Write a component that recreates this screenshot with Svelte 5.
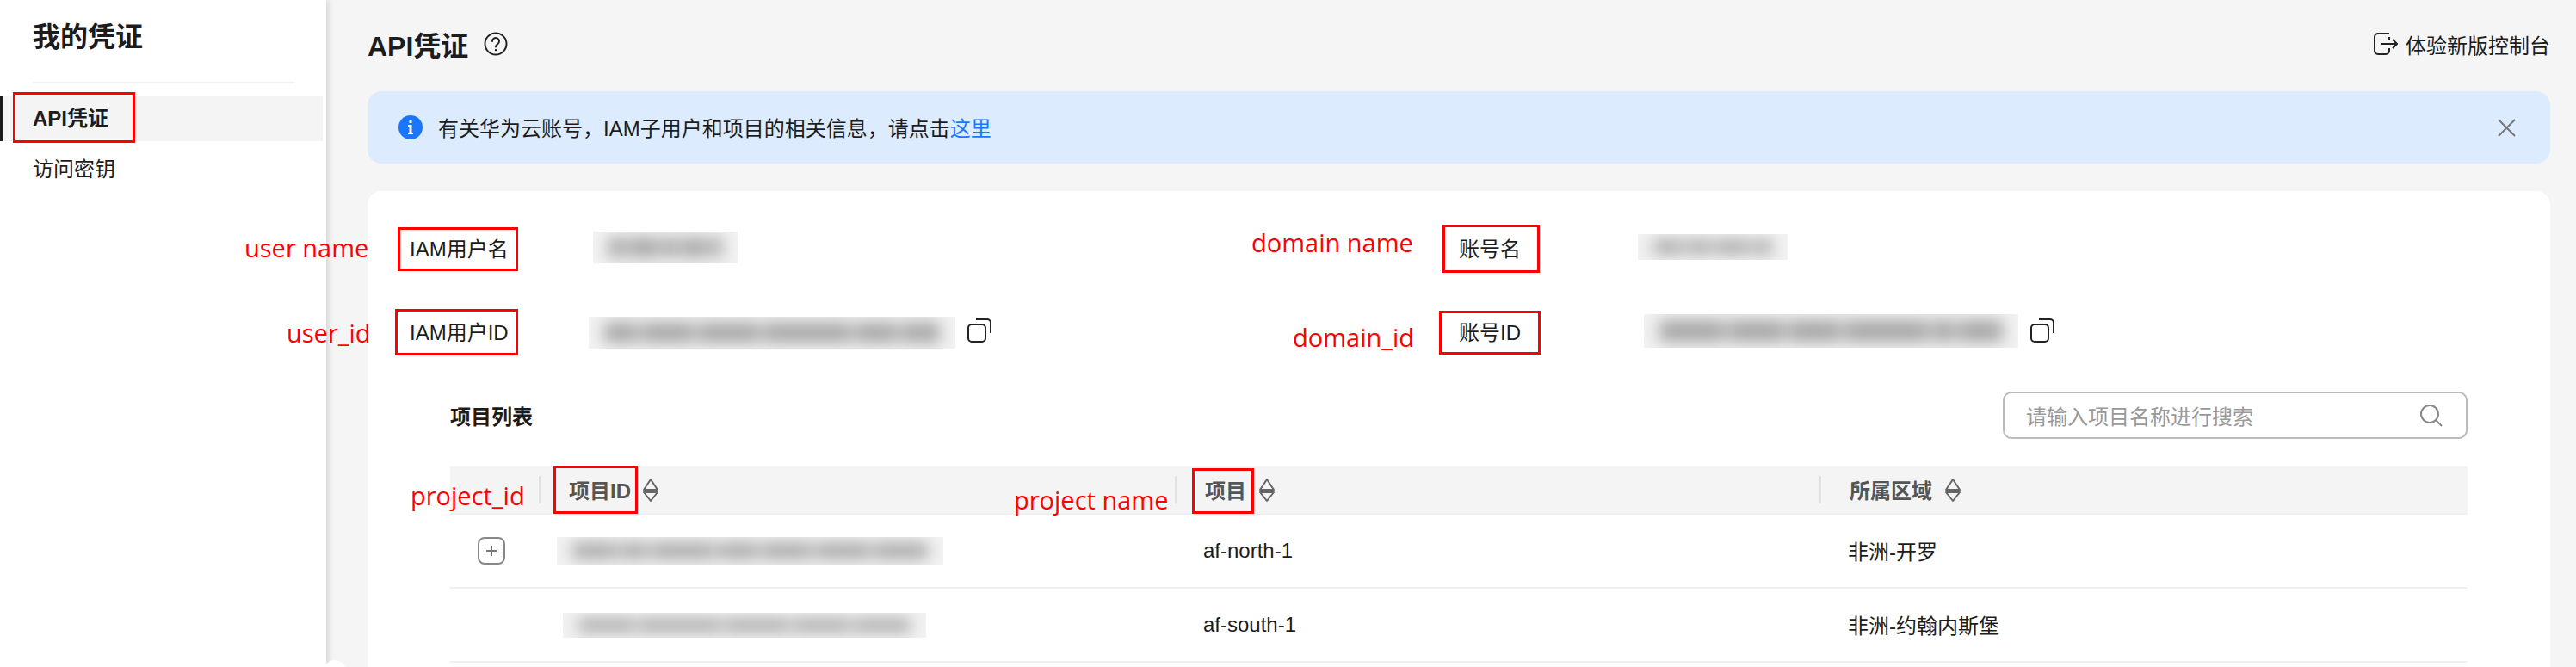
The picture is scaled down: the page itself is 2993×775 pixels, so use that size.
<script>
  const infoRows = [
    [
      { label: 'IAM用户名', dx: 5, dy: 1, w: 168, h: 37, bits: [20, 36, 18, 30, 14] },
      { label: '账号名', dx: 0, dy: 0, w: 174, h: 30, bits: [34, 28, 40, 22] }
    ],
    [
      { label: 'IAM用户ID', dx: 0, dy: 4, w: 426, h: 37, copy: true, bits: [38, 60, 70, 100, 48, 44] },
      { label: '账号ID', dx: 7, dy: 1, w: 435, h: 39, copy: true, bits: [70, 60, 56, 90, 24, 48] }
    ]
  ];

  const columns = [
    { title: '项目ID', gap: 13 },
    { title: '项目', gap: 14 },
    { title: '所属区域', gap: 14 }
  ];

  const projects = [
    { expand: true, dx: -12, w: 449, h: 32, bits: [50, 30, 70, 44, 56, 60, 60], region: 'af-north-1', area: '非洲-开罗' },
    { expand: false, dx: -5, w: 422, h: 29, bits: [60, 86, 68, 60, 60], region: 'af-south-1', area: '非洲-约翰内斯堡' }
  ];

  // red annotations drawn on top of the screenshot
  const boxes = [
    [15, 107, 142, 59],
    [462, 264, 140, 51],
    [459, 359, 143, 54],
    [1676, 261, 113, 56],
    [1672, 361, 118, 51],
    [643, 541, 98, 56],
    [1385, 544, 72, 53]
  ];
  const notes = [
    ['user name', 284, 288],
    ['user_id', 333, 387],
    ['domain name', 1454, 282],
    ['domain_id', 1502, 392],
    ['project_id', 477, 576],
    ['project name', 1178, 581]
  ];
</script>

<div class="page">
  <aside class="side">
    <h2 class="side-title">我的凭证</h2>
    <nav class="side-nav">
      <a class="side-item active">API凭证</a>
      <a class="side-item">访问密钥</a>
    </nav>
  </aside>

  <main class="main">
    <header class="head">
      <h1 class="head-title">API凭证</h1>
      <svg class="help" width="28" height="28" viewBox="0 0 28 28" fill="none" stroke="#222" stroke-width="2">
        <circle cx="14" cy="14" r="12.500" />
        <path d="M10 11a4 4 0 1 1 6.300 3.200c-1.500 1-2.300 1.700-2.300 3.300" stroke-linecap="round" />
        <path d="M14 20v2.200" />
      </svg>
      <a class="head-link">
        <svg width="28" height="26" viewBox="0 0 28 26" fill="none" stroke="#222" stroke-width="2">
          <path d="M18 1H5a4 4 0 0 0-4 4v16a4 4 0 0 0 4 4h9a4 4 0 0 0 4-4v-3" />
          <path d="M18 8V5M9 13h18M22 8l5 5-5 5" />
        </svg>
        体验新版控制台
      </a>
    </header>

    <div class="banner">
      <svg width="28" height="28" viewBox="0 0 28 28">
        <circle cx="14" cy="14" r="14" fill="#1b76fe" />
        <rect x="12.500" y="6" width="3" height="3" fill="#fff" />
        <path d="M11 11h4.500v9H17v2h-6v-2h1.500v-7H11z" fill="#fff" />
      </svg>
      <span class="banner-text">有关华为云账号，IAM子用户和项目的相关信息，请点击<a class="banner-link">这里</a></span>
      <svg class="banner-close" width="21" height="21" viewBox="0 0 21 21" stroke="#777" stroke-width="2">
        <path d="M1 1l19 19M20 1L1 20" />
      </svg>
    </div>

    <section class="card">
      {#each infoRows as row}
        <div class="info-row">
          {#each row as item}
            <div class="info-label">{item.label}</div>
            <div class="info-value">
              <div class="mask" style="margin-left:{item.dx}px;margin-top:{item.dy}px;width:{item.w}px;height:{item.h}px">
                <div class="mask-bits">
                  {#each item.bits as b}<i style="flex-grow:{b}"></i>{/each}
                </div>
              </div>
              {#if item.copy}
                <svg class="copy" width="28" height="28" viewBox="0 0 28 28" fill="none" stroke="#222" stroke-width="2">
                  <rect x="1" y="7" width="20" height="20" rx="4" />
                  <path d="M10 1h13a4 4 0 0 1 4 4v12" />
                </svg>
              {/if}
            </div>
          {/each}
        </div>
      {/each}

      <div class="toolbar">
        <h3 class="toolbar-title">项目列表</h3>
        <div class="search">
          <span class="search-hint">请输入项目名称进行搜索</span>
          <svg width="28" height="26" viewBox="0 0 28 26" fill="none" stroke="#888" stroke-width="2">
            <circle cx="12" cy="11" r="10" />
            <path d="M19 18l7 7" />
          </svg>
        </div>
      </div>

      <div class="table">
        <div class="tr th">
          <div class="cell"></div>
          {#each columns as col}
            <div class="cell sep">
              <span>{col.title}</span>
              <svg style="margin-left:{col.gap}px" width="20" height="28" viewBox="0 0 20 28" fill="none" stroke="#666" stroke-width="2">
                <path d="M10 2l8 12H2zM2 17h16l-8 10z" stroke-linejoin="round" />
              </svg>
            </div>
          {/each}
        </div>
        {#each projects as p}
          <div class="tr">
            <div class="cell expand">
              {#if p.expand}
                <span class="plus">
                  <svg width="14" height="14" viewBox="0 0 14 14" stroke="#777" stroke-width="2"><path d="M7 1v12M1 7h12" /></svg>
                </span>
              {/if}
            </div>
            <div class="cell">
              <div class="mask" style="margin-left:{p.dx}px;width:{p.w}px;height:{p.h}px">
                <div class="mask-bits">
                  {#each p.bits as b}<i style="flex-grow:{b}"></i>{/each}
                </div>
              </div>
            </div>
            <div class="cell">{p.region}</div>
            <div class="cell area">{p.area}</div>
          </div>
        {/each}
      </div>
    </section>
  </main>

  <span class="collapse-tab"></span>

  {#each boxes as [x, y, w, h]}
    <div class="red-box" style="left:{x}px;top:{y}px;width:{w}px;height:{h}px"></div>
  {/each}
  {#each notes as [text, x, y]}
    <span class="red-note" style="left:{x}px;top:{y}px">{text}</span>
  {/each}
</div>

<style>
  :global(body) {
    margin: 0;
    overflow: hidden;
  }
  .page {
    position: relative;
    display: flex;
    width: 2993px;
    height: 775px;
    overflow: hidden;
    background: #f5f5f5;
    color: #1c1c1c;
    font-family: "Liberation Sans", "Noto Sans CJK SC", sans-serif;
    font-size: 24px;
  }

  .side {
    flex: none;
    width: 379px;
    background: #fff;
    box-shadow: 3px 0 6px rgba(0, 0, 0, 0.12);
    z-index: 1;
  }
  .side-title {
    margin: 0 36px 0 38px;
    padding: 21px 0 30px;
    height: 44px;
    line-height: 44px;
    font-size: 32px;
    font-weight: 700;
    border-bottom: 2px solid #f0f0f0;
  }
  .side-nav {
    display: flex;
    flex-direction: column;
    margin-top: 15px;
  }
  .side-item {
    height: 52px;
    width: 375px;
    padding-left: 38px;
    box-sizing: border-box;
    line-height: 52px;
    margin-bottom: 7px;
  }
  .side-item.active {
    background: #f4f4f4;
    font-weight: 700;
    box-shadow: inset 3px 0 0 #1c1c1c;
  }

  .main {
    flex: 1;
    min-width: 0;
    padding: 0 30px 0 48px;
  }
  .head {
    display: flex;
    align-items: center;
    height: 106px;
    padding-bottom: 4px;
    box-sizing: border-box;
  }
  .head-title {
    margin: 0;
    font-size: 32px;
    font-weight: 700;
  }
  .help {
    margin-left: 18px;
  }
  .head-link {
    display: flex;
    align-items: center;
    gap: 9px;
    margin-left: auto;
  }

  .banner {
    display: flex;
    align-items: center;
    height: 84px;
    padding: 0 40px 0 36px;
    border-radius: 16px;
    background: #dcebfe;
  }
  .banner-text {
    margin-left: 18px;
    padding-bottom: 2px;
  }
  .banner-link {
    color: #1b76fe;
  }
  .banner-close {
    margin-left: auto;
  }

  .card {
    margin-top: 32px;
    height: 600px;
    padding: 43px 96px 0 49px;
    border-radius: 16px;
    background: #fff;
  }
  .info-row {
    display: grid;
    grid-template-columns: 208px 1011px 208px 1fr;
    align-items: center;
    height: 44px;
    margin-bottom: 53px;
  }
  .info-value {
    display: flex;
    align-items: center;
  }
  .copy {
    margin-left: 14px;
  }

  .mask {
    flex: none;
    overflow: hidden;
    background: #f2f2f2;
  }
  .mask-bits {
    display: flex;
    gap: 4px;
    height: 100%;
    padding: 7px 18px;
    box-sizing: border-box;
    filter: blur(9px);
  }
  .mask-bits i {
    height: 100%;
    background: #a6a6a6;
  }

  .toolbar {
    display: flex;
    align-items: center;
    justify-content: space-between;
    margin: -4px 0 32px 47px;
    height: 55px;
  }
  .toolbar-title {
    margin: 0;
    font-size: 24px;
    font-weight: 700;
  }
  .search {
    display: flex;
    align-items: center;
    justify-content: space-between;
    width: 540px;
    height: 55px;
    padding: 0 26px 0 25px;
    box-sizing: border-box;
    border: 2px solid #bbb;
    border-radius: 10px;
  }
  .search-hint {
    color: #999;
  }

  .table {
    margin-left: 47px;
  }
  .tr {
    display: grid;
    grid-template-columns: 103px 739px 749px 1fr;
    align-items: center;
    height: 86px;
    box-sizing: border-box;
    border-bottom: 2px solid #f0f0f0;
  }
  .cell {
    display: flex;
    align-items: center;
    padding-left: 33px;
  }
  .area {
    padding-bottom: 2px;
  }
  .th {
    height: 56px;
    background: #f4f4f4;
    color: #555;
    font-weight: 700;
  }
  .sep {
    height: 32px;
    border-left: 2px solid #e2e2e2;
    box-sizing: border-box;
    margin-top: -1px;
  }
  .expand {
    padding-left: 32px;
  }
  .plus {
    display: flex;
    align-items: center;
    justify-content: center;
    width: 32px;
    height: 32px;
    box-sizing: border-box;
    border: 2px solid #888;
    border-radius: 8px;
  }

  .collapse-tab {
    position: absolute;
    left: 376px;
    top: 767px;
    width: 26px;
    height: 26px;
    border-radius: 50%;
    background: #fff;
    z-index: 2;
  }

  .red-box {
    position: absolute;
    box-sizing: border-box;
    border: 3px solid #f00;
    z-index: 3;
  }
  .red-note {
    position: absolute;
    transform: translateY(-50%);
    color: #f00;
    font-family: "Open Sans", sans-serif;
    font-size: 29px;
    line-height: 40px;
    white-space: nowrap;
    z-index: 3;
  }
</style>
